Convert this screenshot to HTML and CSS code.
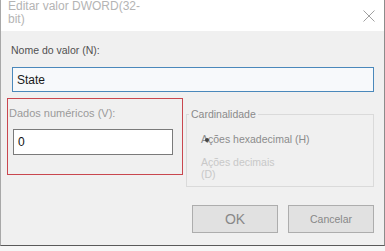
FILE: index.html
```html
<!DOCTYPE html>
<html lang="pt">
<head>
<meta charset="utf-8">
<link rel="stylesheet" href="styles.css">
</head>
<body>
<div class="dialog">
  <div class="titlebar">
    <div class="title">Editar valor DWORD(32-<br>bit)</div>
    <svg class="close" width="12" height="12" viewBox="0 0 12 12"><path d="M0.5 0.5 L11.5 11.5 M11.5 0.5 L0.5 11.5" stroke="#a0a0a0" stroke-width="1" fill="none"/></svg>
  </div>
  <div class="content">
    <div class="label-name">Nome do valor (N):</div>
    <div class="input name-input">State</div>
    <div class="row">
      <div class="data-panel">
        <div class="label-data">Dados numéricos (V):</div>
        <div class="input data-input">0</div>
      </div>
      <fieldset class="group">
        <legend>Cardinalidade</legend>
        <div class="opt opt-hex">Ações hexadecimal (H)<span class="dot"></span></div>
        <div class="opt opt-dec">Ações decimais<br>(D)</div>
      </fieldset>
    </div>
    <div class="buttons">
      <div class="btn btn-ok">OK</div>
      <div class="btn btn-cancel">Cancelar</div>
    </div>
  </div>
</div>
</body>
</html>
```
FILE: styles.css
```css
html, body {
  margin: 0;
  padding: 0;
}
body {
  width: 385px;
  height: 251px;
  background: #f6f6f6;
  font-family: "Liberation Sans", Arial, sans-serif;
  overflow: hidden;
}
.dialog {
  width: 385px;
  height: 246px;
  box-sizing: border-box;
  background: #f0f0f0;
  border-left: 1px solid #a8a8a8;
  border-right: 1px solid #8c8c8c;
  border-bottom: 1px solid #5a5a5a;
  display: flex;
  flex-direction: column;
}
.titlebar {
  height: 31px;
  background: #ffffff;
  display: flex;
  justify-content: space-between;
  align-items: flex-start;
  padding-left: 7px;
  padding-right: 9px;
  flex: none;
}
.title {
  white-space: nowrap;
  font-size: 12px;
  line-height: 13px;
  color: #b4b4b4;
}
.close {
  margin-top: 10px;
}
.content {
  padding: 13px 10px 0 6px;
  display: flex;
  flex-direction: column;
}
.label-name {
  margin-left: 4px;
  font-size: 10.5px;
  line-height: 13px;
  color: #505050;
}
.input {
  box-sizing: border-box;
  font-size: 12px;
  color: #1a1a1a;
  display: flex;
  align-items: center;
  padding-left: 4px;
}
.name-input {
  margin-top: 10px;
  margin-left: 5px;
  height: 25px;
  border: 1px solid #4a88bb;
  background: #f7f9fb;
}
.row {
  margin-top: 6px;
  display: grid;
  grid-template-columns: 176px 1fr;
  column-gap: 3px;
  align-items: start;
}
.data-panel {
  box-sizing: border-box;
  height: 77px;
  border: 1px solid #c9474f;
  padding: 7px 9px 0 1px;
}
.label-data {
  font-size: 11px;
  line-height: 14px;
  color: #9a9a9a;
}
.data-input {
  margin-top: 9px;
  margin-left: 4px;
  height: 26px;
  border: 1px solid #7a7a7a;
  background: #ffffff;
  color: #111111;
}
.group {
  margin: 9px 0 0 0;
  padding: 0 0 6px 2px;
  border: 1px solid #dadada;
  min-width: 0;
}
.group legend {
  padding: 0 2px;
  font-size: 10.5px;
  line-height: 14px;
  color: #8a8a8a;
}
.opt {
  padding-left: 12px;
  font-size: 10.5px;
  line-height: 12px;
}
.opt-hex {
  margin-top: 12px;
  color: #8c8c8c;
  position: relative;
}
.dot {
  position: absolute;
  left: 16px;
  top: 5px;
  width: 4px;
  height: 4px;
  border-radius: 50%;
  background: #444;
}
.opt-dec {
  margin-top: 11px;
  color: #c8c8c8;
}
.buttons {
  margin-top: 18px;
  display: flex;
  justify-content: flex-end;
  gap: 10px;
}
.btn {
  box-sizing: border-box;
  width: 86px;
  height: 28px;
  background: #e1e1e1;
  border: 1px solid #adadad;
  color: #888888;
  display: flex;
  align-items: center;
  justify-content: center;
}
.btn-ok {
  font-size: 14px;
}
.btn-cancel {
  font-size: 10.5px;
}
```
